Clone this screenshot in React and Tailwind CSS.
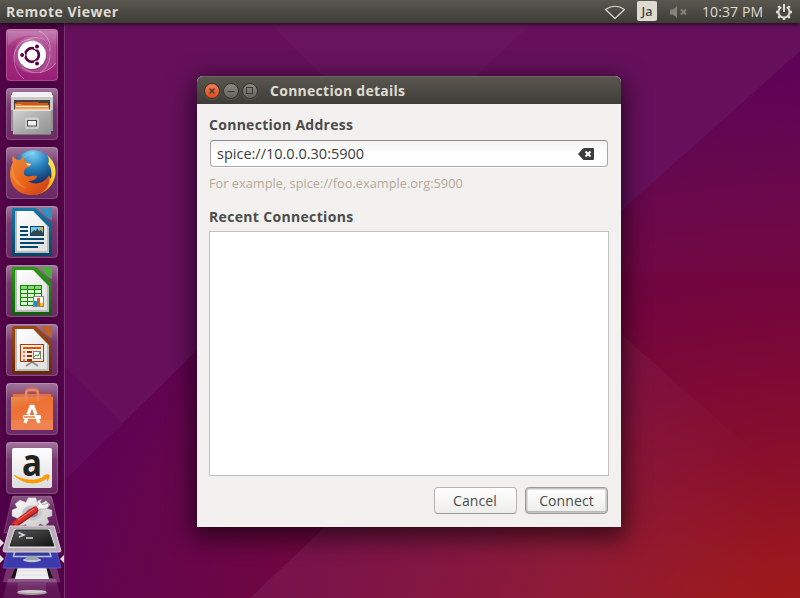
import React from "react";

function Wallpaper() {
  return (
    <svg className="absolute inset-0" width="800" height="598" viewBox="0 0 800 598" aria-hidden="true">
      <defs>
        <radialGradient id="wall" gradientUnits="userSpaceOnUse" cx="0" cy="0" r="600" gradientTransform="translate(820 640) scale(1.42 1)">
          <stop offset="0" stopColor="#a01916" />
          <stop offset=".12" stopColor="#9b181c" />
          <stop offset=".32" stopColor="#870e2c" />
          <stop offset=".6" stopColor="#72053e" />
          <stop offset=".8" stopColor="#65064c" />
          <stop offset=".96" stopColor="#5d0055" />
          <stop offset="1" stopColor="#5c0054" />
        </radialGradient>
        <linearGradient id="facet" gradientUnits="userSpaceOnUse" x1="560" y1="0" x2="770" y2="0">
          <stop offset="0" stopColor="#fff" stopOpacity=".055" /><stop offset="1" stopColor="#fff" stopOpacity="0" />
        </linearGradient>
      </defs>
      <rect width="800" height="598" fill="url(#wall)" />
      <path d="M0 0H800V51L621 211L350 200L197 350L65 480H0Z" fill="#66105c" />
      <path d="M282 35L270 23H532L440 110H357Z" fill="#fff" opacity=".018" />
      <path d="M65 367L122 423L65 480Z" fill="#5e0054" opacity=".4" />
      <path d="M800 51L560 265V272H800Z" fill="#fff" opacity=".012" />
      <path d="M560 280L800 493V598H250L440 418Z" fill="url(#facet)" />
    </svg>
  );
}

function Tile({ children, tone = "bg-white/10" }) {
  return (
    <div className={`relative h-[52px] w-[52px] shrink-0 rounded-[4px] ${tone} shadow-[0_0_4px_rgba(30,0,30,0.5)]`}>
      <div className="absolute inset-0 rounded-[4px] bg-gradient-to-b from-white/40 via-white/12 via-35% to-white/5" />
      <div className="relative h-[52px] w-[52px]">{children}</div>
      <div className="absolute inset-0 rounded-[4px] border border-white/18" />
    </div>
  );
}

const Icon = ({ children }) => (
  <svg width="52" height="52" viewBox="0 0 52 52" className="block overflow-visible">{children}</svg>
);

function Dash() {
  return (
    <Icon>
      <defs>
        <radialGradient id="dash"><stop offset="0" stopColor="#fff" stopOpacity=".45" /><stop offset="1" stopColor="#fff" stopOpacity=".12" /></radialGradient>
      </defs>
      <path d="M2 17C14 3 34 4 43 15C48 25 43 38 31 44C44 43 50 35 50 35V2H2Z" fill="#fff" opacity=".14" />
      <circle cx="26" cy="26" r="18.5" fill="url(#dash)" />
      <g fill="none" stroke="#fff" strokeOpacity=".32">
        <path d="M15 18C25 2 43 8 44 22C45 34 39 41 34 44" />
        <path d="M36 17C20 2 8 17 8 29C8 40 14 47 18 50" />
        <path d="M16 38C25 47 42 45 50 34" />
        <path d="M33 2C43 6 45 17 44 22" />
      </g>
      <circle cx="26.5" cy="27" r="14" fill="#4d0042" opacity=".35" />
      <circle cx="26" cy="26" r="14" fill="#fff" />
      <circle cx="26" cy="26" r="6.8" fill="none" stroke="#5b0049" strokeWidth="2.8" />
      <g stroke="#fff" strokeWidth="1.2">
        <circle cx="16.1" cy="26" r="2.6" fill="#5b0049" /><circle cx="31" cy="17.4" r="2.6" fill="#5b0049" /><circle cx="31" cy="34.6" r="2.6" fill="#5b0049" />
      </g>
      <circle cx="26" cy="26" r="5.3" fill="#fff" />
    </Icon>
  );
}

function Files() {
  return (
    <Icon>
      <defs>
        <linearGradient id="cab" x2="1" y2="1"><stop stopColor="#d2d2d2" /><stop offset=".5" stopColor="#adadad" /><stop offset="1" stopColor="#8f8f8f" /></linearGradient>
      </defs>
      <path d="M5 9H47V43H5Z" fill="#929292" />
      <path d="M7 4H45L47 9V22H5V9Z" fill="#c9c9c9" />
      <path d="M7 4H45L47 9H5Z" fill="#f2f2f2" />
      <path d="M8 12H44V22H8Z" fill="#4a3c38" />
      <path d="M10 15L11 14H32L33 15H42V22H9V15Z" fill="#c95a22" />
      <path d="M9 16H15L16 17H43V22H9Z" fill="#ee9240" />
      <path d="M10 18H42V19H10Z" fill="#fff2de" />
      <path d="M9 20H43V22H9Z" fill="#f2b066" />
      <path d="M7 22H45V47H7Z" fill="url(#cab)" />
      <path d="M7 21.5H45V23H7Z" fill="#e4e4e4" />
      <path d="M7 46H45V47H7Z" fill="#777" />
      <rect x="19" y="29.5" width="14" height="11.5" rx="2" fill="#cecece" />
      <rect x="21.5" y="32.5" width="9" height="5.5" fill="#eee" stroke="#4a4a4a" />
    </Icon>
  );
}

function Firefox() {
  return (
    <Icon>
      <defs>
        <radialGradient id="globe" cx=".5" cy=".1" r=".8"><stop stopColor="#7cd0f5" /><stop offset=".45" stopColor="#2680bd" /><stop offset="1" stopColor="#10245c" /></radialGradient>
        <linearGradient id="fox" x1="0" y1="0" x2="1" y2="1"><stop stopColor="#f08a35" /><stop offset=".5" stopColor="#e9661d" /><stop offset="1" stopColor="#c93a13" /></linearGradient>
        <linearGradient id="tail" x1="1" y1="0" x2=".2" y2="1"><stop stopColor="#fff36b" /><stop offset=".45" stopColor="#fbc928" /><stop offset="1" stopColor="#e96a1a" /></linearGradient>
      </defs>
      <circle cx="27" cy="23" r="20" fill="url(#globe)" />
      <path d="M16 8C19 5 25 3 30 5C28 8 22 7 20 11C18 12 16 10 16 8Z" fill="#9edcf5" opacity=".35" />
      <path d="M41 8C47 13 50 19 49.5 27C48 38 40 47 28 48C37 44 43 38 43 29L45 32C46 25 45 19 42 17C43.5 14 43 11 41 8Z" fill="url(#tail)" />
      <path d="M7 9C9 12 11 13 14 13C15 11 17 9.5 18 9C18 12 18.500 14 20 15L25 17C25 19 23 20 20 21C18 23 17 26 19 28.500C23 31 26 28 31 29C31 32 27 34 22 34C29 39 39 36 43 28C46 37 38 48 26 48C12 48 4 39 4 27C4 21 6 17 7 15C6 13 6 11 7 9Z" fill="url(#fox)" />
      <path d="M7 17C6 25 11 36 20 41C14 41 7 34 5 27Z" fill="#ffae4c" opacity=".35" />
      <path d="M20.500 16L25 17L24 18.500H21Z" fill="#ffe8d0" />
    </Icon>
  );
}

function Sheet({ id, from, to, flap, children }) {
  return (
    <Icon>
      <defs>
        <linearGradient id={id} x2="0" y2="1"><stop stopColor={from} /><stop offset="1" stopColor={to} /></linearGradient>
        <linearGradient id={id + "p"} x2=".6" y2="1"><stop stopColor="#fff" /><stop offset="1" stopColor="#e3e3e3" /></linearGradient>
      </defs>
      <path d="M8 2H30L46 18V48Q46 50 44 50H8Q6 50 6 48V4Q6 2 8 2Z" fill={`url(#${id})`} />
      <path d="M34 2H45Q46 2 46 3V14Q42 13 39 9Q37 5 34 2Z" fill={flap} />
      <path d="M9 5H27L43 21V47H9Z" fill="#b9bcbd" />
      <path d="M11 5H27L41 20V45H11Z" fill={`url(#${id}p)`} />
      {children}
    </Icon>
  );
}

function Writer() {
  return (
    <Sheet id="writer" from="#1478a8" to="#074468" flap="#3292bd">
      <path d="M14 21H22M14 25H22M14 29H22M14 33H38M14 37H38M14 41H32" stroke="#06486c" strokeWidth="2" />
      <rect x="24.5" y="20.5" width="13" height="9" fill="#78c7e8" stroke="#06486c" />
      <path d="M25 29V27L28 24L30 25L31 22L33 25L35 24L37 27V29Z" fill="#36474d" />
      <rect x="34" y="21" width="3" height="3" fill="#c7b94c" />
    </Sheet>
  );
}

function Calc() {
  return (
    <Sheet id="calc" from="#2b9a15" to="#0d6108" flap="#4aaf3c">
      <rect x="14" y="20" width="22" height="21" fill="#dbf5d3" />
      <rect x="14" y="20" width="22" height="4" fill="#86d979" />
      <path d="M14.5 20V41M21.5 20V41M28.5 20V41M35.5 20V41M14 20.5H36M14 24.5H36M14 28.5H36M14 32.5H36M14 36.5H36M14 40.5H36" stroke="#168606" />
      <rect x="27.5" y="31.5" width="10" height="10" fill="#fafafa" stroke="#888" />
      <path d="M28 36H31V41H28Z" fill="#168fd2" /><path d="M31 33H34V41H31Z" fill="#df6016" /><path d="M34 38H37V41H34Z" fill="#efbd14" />
    </Sheet>
  );
}

function Impress() {
  return (
    <Sheet id="impress" from="#9b4a17" to="#6c2804" flap="#b7652d">
      <path d="M26 38L20 42M26 38L32 42" stroke="#8d9091" strokeWidth="2" />
      <rect x="14.5" y="20.5" width="23" height="17" fill="#fce6db" stroke="#a43f08" />
      <path d="M17 24H35" stroke="#d4570f" strokeWidth="2" />
      <path d="M17 28H19M17 32H19M17 36H19" stroke="#e6794d" strokeWidth="2" />
      <path d="M21 28H26M21 32H26M21 36H26" stroke="#853106" strokeWidth="2" />
      <rect x="27.5" y="27.5" width="7" height="7" fill="#fff" stroke="#788083" />
      <path d="M28 33L30 31L32 32L34 28" fill="none" stroke="#229b24" />
    </Sheet>
  );
}

function Software() {
  return (
    <Icon>
      <defs><linearGradient id="bag" x2=".4" y2="1"><stop stopColor="#e49251" /><stop offset=".35" stopColor="#ed7132" /><stop offset="1" stopColor="#ef7945" /></linearGradient></defs>
      <path d="M6 10H46L47 14V47H5V14Z" fill="#bd4b28" />
      <path d="M7 11H45V15H7Z" fill="#dd7250" />
      <path d="M20 12V9Q20 5 24 5H28Q32 5 32 9V12" fill="none" stroke="#c66a58" strokeWidth="2" />
      <path d="M5 14H47V47H5Z" fill="url(#bag)" />
      <path d="M5 37H47V47H5Z" fill="#fff" opacity=".08" />
      <path d="M20 18V10Q20 7 24 7H28Q32 7 32 10V18" fill="none" stroke="#e98665" strokeWidth="2.4" />
      <path d="M22 31.500L25 23.500H27L30 31.500M20.500 36L19 40M31.500 36L33 40" fill="none" stroke="#fff" strokeWidth="3.400" />
      <rect x="17" y="32" width="18" height="4" rx="1" fill="#fff" />
      <path d="M18 34H29" stroke="#df7135" strokeWidth="1.4" />
    </Icon>
  );
}

function Amazon() {
  return (
    <Icon>
      <defs><linearGradient id="amz" x2="0" y2="1"><stop stopColor="#fff" /><stop offset="1" stopColor="#dedede" /></linearGradient></defs>
      <rect x="6" y="6" width="40" height="40" rx="2" fill="url(#amz)" />
      <text x="26" y="33.5" textAnchor="middle" fill="#222" fontSize="37" fontWeight="700" fontFamily="'Open Sans', sans-serif" textLength="20" lengthAdjust="spacingAndGlyphs">a</text>
      <path d="M8 33C17 42 31 44 41 36L39.5 34.5C29 40 18 39 8 33Z" fill="#ff9900" stroke="#ff9900" strokeWidth=".8" />
      <path d="M36 34.5Q42 31 43.5 33Q44 36 41 40Q41 37 41 35Z" fill="#ff9900" />
    </Icon>
  );
}

function FoldedStack() {
  return (
    <svg width="64" height="104" viewBox="0 494 64 104" className="block shrink-0" aria-hidden="true">
      <defs>
        <linearGradient id="fold" x2="0" y2="1"><stop stopColor="#fff" stopOpacity=".36" /><stop offset=".4" stopColor="#fff" stopOpacity=".15" /><stop offset="1" stopColor="#fff" stopOpacity=".12" /></linearGradient>
        <linearGradient id="gear" x2="1" y2="1"><stop stopColor="#fff" /><stop offset="1" stopColor="#c5c3c5" /></linearGradient>
        <linearGradient id="term" x2="1" y2="1"><stop stopColor="#5b5b5b" /><stop offset=".5" stopColor="#343434" /><stop offset="1" stopColor="#151515" /></linearGradient>
      </defs>
      <path d="M8 579H56L61 598H3Z" fill="url(#fold)" opacity=".65" />
      <path d="M18 583H46V592H17Z" fill="#fff" opacity=".1" />
      <ellipse cx="32" cy="592.5" rx="15" ry="2.6" fill="#a5a1a0" /><ellipse cx="32" cy="591.5" rx="14" ry="1.4" fill="#d0cdc8" />
      <path d="M8 565H56L60 582H3Z" fill="#cba2c0" opacity=".3" stroke="#e4b3d5" strokeOpacity=".5" />
      <path d="M16 566H48L53 578H49L46 568H18L15 578H11Z" fill="#151115" />
      <path d="M18 566H46L49 579H15Z" fill="#efefef" /><path d="M17 571H47M16 575H48" stroke="#ddd" />
      <path d="M8 548H56L61 568H3Z" fill="#3d3aae" stroke="#6763c9" strokeWidth=".7" />
      <path d="M15 550H49L51 556.5H13.5Z" fill="#343d96" stroke="#b8c1e5" strokeWidth="1.5" />
      <ellipse cx="32" cy="560" rx="9" ry="2.2" fill="#c5c9cf" /><path d="M27 556H37L38 560H26Z" fill="#9da5b2" />
      <path d="M12 498Q12 496 14 496H50Q52 496 52 498L60 533H4Z" fill="url(#fold)" stroke="#fff" strokeOpacity=".18" />
      <g transform="translate(32 513) scale(1 .76)">
        <path d="M-4-20H4L5-15L10-13L14-16L18-11L15-6L20-4L20 4L15 6L17 12L13 17L8 14L4 20H-4L-6 15L-12 17L-17 12L-15 7L-20 4V-4L-15-7L-17-12L-12-17L-6-14Z" fill="url(#gear)" stroke="#b4aeb3" strokeWidth=".5" />
        <circle r="10" fill="#c9c4c8" /><circle r="6" fill="#977790" />
      </g>
      <path d="M34 509L39 504L37 501L42 499L40 502L43 505L48 503Q50 507 45 509L40 509L37 512Z" fill="#f5f5f5" stroke="#999" strokeWidth=".6" />
      <path d="M14.500 524.500L35 510" stroke="#8e1619" strokeWidth="6.5" strokeLinecap="round" />
      <path d="M14.500 524L35 509.5" stroke="#d9302d" strokeWidth="5" strokeLinecap="round" />
      <path d="M18 520L34 508.8" stroke="#f08077" strokeWidth="1" /><circle cx="13.700" cy="525" r="1.1" fill="#611113" />
      <path d="M10 526H54L61 551Q61 552 59 552H5Q3 552 3 550Z" fill="#b9aeb7" stroke="#ddd2da" />
      <path d="M14 529H50L56 548H8Z" fill="#dedede" /><path d="M15.5 530H48.5L54 546H10Z" fill="url(#term)" stroke="#262626" />
      <path d="M18.5 532.5L24 535L19 537M26 538H33" fill="none" stroke="#d6d6d6" strokeWidth="1.5" />
      <path d="M0 539L4 543L0 547ZM0 555L4 559L0 563ZM64 555L60 559L64 563Z" fill="#e5dce4" />
    </svg>
  );
}

function Launcher() {
  return (
    <aside className="relative flex h-[575px] w-[65px] shrink-0 flex-col items-center overflow-hidden border-r border-[#7a3672] bg-[#4c0042]/75">
      <div className="flex flex-col gap-[7px] pt-[6px]">
        <Tile tone="bg-[#94126f]"><Dash /></Tile>
        <Tile><Files /></Tile>
        <Tile><Firefox /></Tile>
        <Tile><Writer /></Tile>
        <Tile><Calc /></Tile>
        <Tile><Impress /></Tile>
        <Tile><Software /></Tile>
        <Tile><Amazon /></Tile>
      </div>
      <FoldedStack />
    </aside>
  );
}

function TopBar() {
  return (
    <header className="relative z-10 flex h-[23px] items-center bg-gradient-to-b from-[#5a574f] to-[#3d3c37] pl-[6px] text-[#dfdbd2] shadow-[0_1px_5px_rgba(0,0,0,0.75)]">
      <span className="whitespace-nowrap text-[14px] font-bold leading-[22px] tracking-[0.5px]">Remote Viewer</span>
      <div className="ml-auto flex h-full items-center pr-[7px]">
        <svg width="22" height="18" viewBox="604 2 22 18" className="mr-[11px]"><path d="M605.5 8.5Q615 2 624.500 8.5L615 17.5Z" fill="none" stroke="#dfdbd2" strokeWidth="1.2" strokeLinejoin="round" /></svg>
        <span className="mb-[1px] flex h-5 w-5 items-center justify-center rounded-[2px] bg-[#dfdbd2] pt-[2px] text-[12.5px] font-semibold leading-none text-[#484640]">Ja</span>
        <svg width="18" height="14" viewBox="0 0 18 14" className="ml-[13px] mr-[14px]"><path d="M0 4.5H3L7 1V13L3 9.5H0Z" fill="#85827a" /><path d="M11 4.5L16 9.5M16 4.5L11 9.5" stroke="#85827a" strokeWidth="2" /></svg>
        <span className="w-[62px] whitespace-nowrap text-[14px] leading-[22px] tracking-[0.1px]">10:37 PM</span>
        <svg width="18" height="18" viewBox="-9 -9 18 18" className="ml-[11px]">
          <g fill="none" stroke="#dfdbd2"><path d="M-2.7-4.9A5.6 5.6 0 1 0 2.7-4.9" strokeWidth="2" /><path d="M0-8V0" strokeWidth="2" /><path d="M-8 0H-6M6 0H8M0 6V8M-5.8-5.8L-4-4M5.8-5.8L4-4M-5.8 5.8L-4 4M5.8 5.8L4 4" strokeWidth="2.4" /></g>
        </svg>
      </div>
    </header>
  );
}

function WindowButton({ kind }) {
  const close = kind === "close";
  return (
    <span className={`flex h-4 w-4 items-center justify-center rounded-full border border-[#35332f] bg-gradient-to-b ${close ? "from-[#f77b52] to-[#df4915]" : "from-[#8b8982] to-[#65635c]"} shadow-[0_1px_0_rgba(255,255,255,0.12)]`}>
      <svg width="14" height="14" viewBox="0 0 14 14" fill="none" stroke="#3b3934" strokeWidth="1" className="shrink-0">
        {close && <path d="M4.5 4.5L9.5 9.5M9.5 4.5L4.5 9.5" strokeWidth="1.4" />}
        {kind === "min" && <path d="M3.5 7.5H10.5" />}
        {kind === "max" && <rect x="3.5" y="3.5" width="6" height="6" />}
      </svg>
    </span>
  );
}

function Dialog() {
  return (
    <section className="ml-[132px] mt-[53px] flex h-[451px] w-[424px] flex-col rounded-t-[6px] bg-[#f2f1f0] shadow-[0_7px_24px_4px_rgba(0,0,0,0.6)]">
      <div className="flex h-7 shrink-0 items-center gap-[3px] rounded-t-[6px] border-t border-[#69665e] bg-gradient-to-b from-[#59564e] to-[#3d3c37] pl-[7px]">
        <WindowButton kind="close" /><WindowButton kind="min" /><WindowButton kind="max" />
        <span className="ml-[9px] whitespace-nowrap text-[14px] font-bold leading-5 tracking-[0.27px] text-[#dfdbd2]">Connection details</span>
      </div>
      <div className="flex flex-1 flex-col px-3 pt-[11px] text-[#4c4c4c]">
        <h2 className="h-5 whitespace-nowrap text-[14px] font-bold leading-5 tracking-[0.28px]">Connection Address</h2>
        <div className="mx-[1px] mt-[5px] flex h-[27px] items-center justify-between rounded-[4px] border border-[#a8a7a5] border-t-[#8b8b8b] bg-gradient-to-b from-[#f4f4f4] to-white to-60% pl-[6px] pr-[13px] shadow-[0_1px_0_#fff]">
          <span className="whitespace-nowrap text-[14.5px] leading-5 text-[#3c3c3c]">spice://10.0.0.30:5900</span>
          <svg width="16" height="12" viewBox="0 0 16 12"><path d="M0 6L5 .6Q5.5 0 6.5 0H15Q16 0 16 1V11Q16 12 15 12H6.5Q5.5 12 5 11.4Z" fill="#3c3c3c" /><path d="M7.5 3.5L12.5 8.5M12.5 3.5L7.5 8.5" stroke="#fff" strokeWidth="2" /></svg>
        </div>
        <p className="mt-[6px] h-5 whitespace-nowrap text-[12.8px] leading-5 text-[#b6a999]">For example, spice://foo.example.org:5900</p>
        <h2 className="mt-[14px] h-5 whitespace-nowrap text-[14px] font-bold leading-5 tracking-[0.33px]">Recent Connections</h2>
        <div className="mt-[4px] h-[245px] border border-[#c1c0be] bg-white" />
        <div className="mr-[1px] mt-[11px] flex justify-end gap-2 text-[14px]">
          <button className="flex h-[27px] w-[83px] items-center justify-center rounded-[4px] border border-[#b6b5b3] border-b-[#999] bg-gradient-to-b from-white to-[#ededeb] pr-[1px] tracking-[0.1px]">Cancel</button>
          <button className="flex h-[27px] w-[83px] items-center justify-center rounded-[4px] border border-[#9c9c9a] bg-gradient-to-b from-white to-[#ededeb] tracking-[0.1px] shadow-[inset_0_0_0_1.5px_#c4c4c2,inset_0_-2px_0_#b0b0ae]">Connect</button>
        </div>
      </div>
    </section>
  );
}

export default function App() {
  return (
    <main className="relative h-[598px] w-[800px] overflow-hidden font-['Open_Sans','Noto_Sans',sans-serif]">
      <Wallpaper />
      <TopBar />
      <div className="relative flex items-start">
        <Launcher />
        <Dialog />
      </div>
    </main>
  );
}
